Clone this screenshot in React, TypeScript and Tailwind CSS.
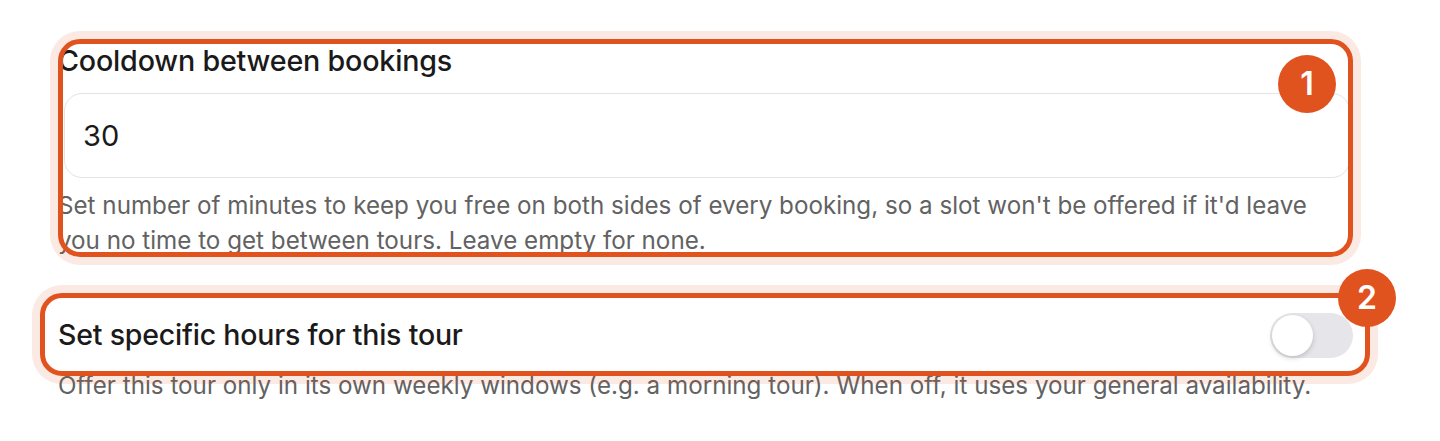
import { useState } from "react";

// Tour settings form with two numbered annotation frames over it

const Marker = ({ n, className }: { n: number; className: string }) => (
  <div
    className={`absolute flex h-[58px] w-[58px] items-center justify-center rounded-full bg-[#e0531f] text-[32px] font-semibold leading-none text-white ${className}`}
  >
    {n}
  </div>
);

export default function App() {
  const [cooldown, setCooldown] = useState("30");
  const [specific, setSpecific] = useState(false);

  return (
    <div className="relative h-[441px] w-full overflow-hidden bg-white font-['Inter',sans-serif] text-[#1a1a1a]">
      <div className="flex w-[1353px] flex-col pl-[58px] pt-[41px]">
        <div className="flex flex-col">
          <label className="text-[28.7px] font-medium leading-[40px] tracking-[-0.2px]">Cooldown between bookings</label>
          <input
            value={cooldown}
            onChange={(e) => setCooldown(e.target.value)}
            className="mt-[12px] ml-[6px] h-[85px] w-[1286px] rounded-[18px] border-[1.5px] border-[#e3e3e3] bg-white px-[18px] text-[29px] text-[#1a1a1a] outline-none"
          />
          <p className="mt-[10px] w-[1275px] text-[24.2px] leading-[35px] text-[#626262]">
            Set number of minutes to keep you free on both sides of every booking, so a slot won't be offered if it'd leave you no time to get between tours. Leave empty for none.
          </p>
        </div>

        <div className="mt-[55px] flex flex-col">
          <div className="flex h-[45px] w-[1295px] items-center justify-between">
            <span className="text-[28.5px] font-medium tracking-[-0.2px]">Set specific hours for this tour</span>
            <button
              onClick={() => setSpecific(!specific)}
              className={`flex h-[45px] w-[83px] items-center rounded-full p-[2px] ${specific ? "justify-end bg-[#e0531f]" : "justify-start bg-[#e6e6ea]"}`}
            >
              <span className="h-[41px] w-[41px] rounded-full bg-white shadow-[0_2px_5px_rgba(0,0,0,0.18)]" />
            </button>
          </div>
          <p className="mt-[10px] w-[1275px] text-[24.2px] leading-[35px] text-[#626262]">
            Offer this tour only in its own weekly windows (e.g. a morning tour). When off, it uses your general availability.
          </p>
        </div>
      </div>

      <div className="pointer-events-none absolute left-[58px] top-[39px] h-[218px] w-[1295px] rounded-[22px] border-[5px] border-[#e0531f] shadow-[0_0_0_8px_rgba(224,83,31,0.12)]" />
      <div className="pointer-events-none absolute left-[40px] top-[293px] h-[83px] w-[1330px] rounded-[22px] border-[5px] border-[#e0531f] shadow-[0_0_0_8px_rgba(224,83,31,0.12)]" />
      <Marker n={1} className="left-[1278px] top-[55px]" />
      <Marker n={2} className="left-[1338px] top-[269px]" />
    </div>
  );
}
